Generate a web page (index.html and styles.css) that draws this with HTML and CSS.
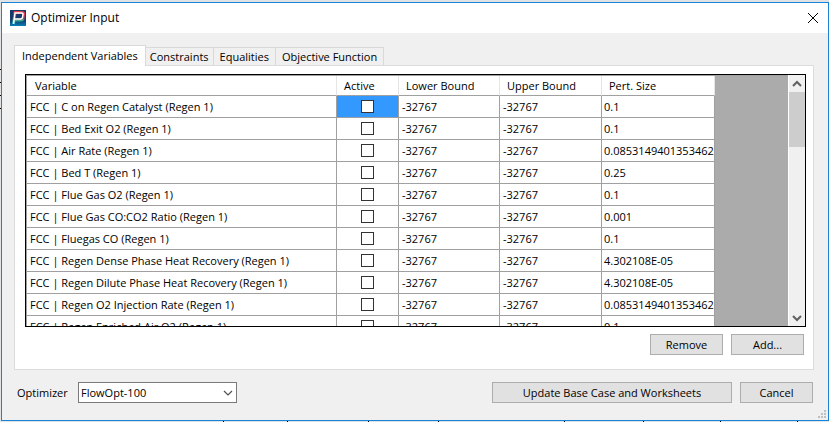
FILE: index.html
```html
<!DOCTYPE html>
<html lang="en">
<head>
<meta charset="utf-8">
<title>Optimizer Input</title>
<link rel="stylesheet" href="styles.css">
</head>
<body>
<main class="window">
  <header class="titlebar">
    <svg class="logo" width="16" height="16" viewBox="0 0 16 16" aria-hidden="true">
      <defs>
        <linearGradient id="tile" x1="0" y1="0" x2="0" y2="1"><stop offset="0" stop-color="#173564"/><stop offset=".65" stop-color="#123c70"/><stop offset="1" stop-color="#087eb5"/></linearGradient>
        <linearGradient id="glow" x1="0" y1="0" x2="0" y2="1"><stop offset="0" stop-color="#d8404c"/><stop offset=".45" stop-color="#a83a5c"/><stop offset=".7" stop-color="#3fae8c"/><stop offset="1" stop-color="#19a9d8"/></linearGradient>
      </defs>
      <path fill="url(#tile)" d="M0 0h16v16H0z"/>
      <path fill="none" stroke="url(#glow)" stroke-width="3" d="M3.500 14 5 2.500h7q2 0 1.700 2L13.200 8q-.4 2-2.500 2H5"/>
      <path fill="none" stroke="#fff" stroke-width="1.500" d="M3.500 14 5 3h6.500q1.700 0 1.500 1.500L12.500 7.500q-.3 1.500-2 1.500H4.500"/>
    </svg>
    <h1 class="title">Optimizer Input</h1>
    <button class="close" type="button" aria-label="Close">
      <svg width="12" height="12" viewBox="0 0 12 12" aria-hidden="true"><path d="m1 1 10 10M11 1 1 11" fill="none" stroke="#000" stroke-width="1"/></svg>
    </button>
  </header>
  <div class="content">
    <div class="tabs" role="tablist">
      <button class="tab selected" type="button" role="tab" aria-selected="true">Independent Variables</button>
      <button class="tab" type="button" role="tab">Constraints</button>
      <button class="tab roomy" type="button" role="tab">Equalities</button>
      <button class="tab roomy" type="button" role="tab">Objective Function</button>
    </div>
    <section class="panel" role="tabpanel">
      <div class="grid">
        <div class="view">
          <table class="data">
            <colgroup><col class="c-name"><col class="c-active"><col class="c-lower"><col class="c-upper"><col class="c-size"></colgroup>
            <thead><tr><th>Variable</th><th>Active</th><th>Lower Bound</th><th>Upper Bound</th><th>Pert. Size</th></tr></thead>
            <tbody>
              <tr><td>FCC | C on Regen Catalyst (Regen 1)</td><td class="check current"><input type="checkbox" aria-label="Active"></td><td>-32767</td><td>-32767</td><td>0.1</td></tr>
              <tr><td>FCC | Bed Exit O2 (Regen 1)</td><td class="check"><input type="checkbox" aria-label="Active"></td><td>-32767</td><td>-32767</td><td>0.1</td></tr>
              <tr><td>FCC | Air Rate (Regen 1)</td><td class="check"><input type="checkbox" aria-label="Active"></td><td>-32767</td><td>-32767</td><td>0.0853149401353462</td></tr>
              <tr><td>FCC | Bed T (Regen 1)</td><td class="check"><input type="checkbox" aria-label="Active"></td><td>-32767</td><td>-32767</td><td>0.25</td></tr>
              <tr><td>FCC | Flue Gas O2 (Regen 1)</td><td class="check"><input type="checkbox" aria-label="Active"></td><td>-32767</td><td>-32767</td><td>0.1</td></tr>
              <tr><td>FCC | Flue Gas CO:CO2 Ratio (Regen 1)</td><td class="check"><input type="checkbox" aria-label="Active"></td><td>-32767</td><td>-32767</td><td>0.001</td></tr>
              <tr><td>FCC | Fluegas CO (Regen 1)</td><td class="check"><input type="checkbox" aria-label="Active"></td><td>-32767</td><td>-32767</td><td>0.1</td></tr>
              <tr><td>FCC | Regen Dense Phase Heat Recovery (Regen 1)</td><td class="check"><input type="checkbox" aria-label="Active"></td><td>-32767</td><td>-32767</td><td>4.302108E-05</td></tr>
              <tr><td>FCC | Regen Dilute Phase Heat Recovery (Regen 1)</td><td class="check"><input type="checkbox" aria-label="Active"></td><td>-32767</td><td>-32767</td><td>4.302108E-05</td></tr>
              <tr><td>FCC | Regen O2 Injection Rate (Regen 1)</td><td class="check"><input type="checkbox" aria-label="Active"></td><td>-32767</td><td>-32767</td><td>0.0853149401353462</td></tr>
              <tr><td>FCC | Regen Enriched Air O2 (Regen 1)</td><td class="check"><input type="checkbox" aria-label="Active"></td><td>-32767</td><td>-32767</td><td>0.1</td></tr>
            </tbody>
          </table>
        </div>
        <div class="scrollbar" aria-hidden="true">
          <svg class="arrow" width="16" height="17" viewBox="0 0 16 17"><path d="m4 11 4-4 4 4" fill="none" stroke="#606060" stroke-width="2"/></svg>
          <div class="thumb"></div>
          <svg class="arrow" width="16" height="17" viewBox="0 0 16 17"><path d="m4 7 4 4 4-4" fill="none" stroke="#606060" stroke-width="2"/></svg>
        </div>
      </div>
      <div class="actions">
        <button class="button" type="button">Remove</button>
        <button class="button" type="button">Add...</button>
      </div>
    </section>
    <footer class="footer">
      <label class="label" for="optimizer">Optimizer</label>
      <div class="combo">
        <select id="optimizer"><option>FlowOpt-100</option></select>
        <svg class="chevron" width="10" height="6" viewBox="0 0 10 6" aria-hidden="true"><path d="m1 1 4 4 4-4" fill="none" stroke="#505050" stroke-width="1.200"/></svg>
      </div>
      <button class="button wide" type="button">Update Base Case and Worksheets</button>
      <button class="button" type="button">Cancel</button>
    </footer>
  </div>
  <svg class="grip" width="9" height="9" viewBox="0 0 9 9" aria-hidden="true"><path fill="#bfbfbf" d="M6 0h2v2H6zM3 3h2v2H3zM6 3h2v2H6zM0 6h2v2H0zM3 6h2v2H3zM6 6h2v2H6z"/></svg>
</main>
</body>
</html>
```
FILE: styles.css
```css
* { box-sizing: border-box; }

/* The edge of a spreadsheet shows round the window: its cell lines are the dark ticks. */
body {
  margin: 0;
  height: 100vh;
  padding: 2px 0 1px 1px;
  display: flex;
  background:
    linear-gradient(#000, #000) 0 69px / 1px 1px no-repeat,
    linear-gradient(#000, #000) 0 82px / 1px 1px no-repeat,
    linear-gradient(#000, #000) 0 95px / 1px 1px no-repeat,
    linear-gradient(#000, #000) 0 108px / 1px 1px no-repeat,
    linear-gradient(#000, #000) 223px 100% / 1px 1px no-repeat,
    linear-gradient(#000, #000) 287px 100% / 1px 1px no-repeat,
    linear-gradient(#000, #000) 368px 100% / 1px 1px no-repeat,
    linear-gradient(#000, #000) 438px 100% / 1px 1px no-repeat,
    linear-gradient(#000, #000) 564px 100% / 1px 1px no-repeat,
    linear-gradient(#000, #000) 643px 100% / 1px 1px no-repeat,
    linear-gradient(#000, #000) 720px 100% / 1px 1px no-repeat,
    linear-gradient(#000, #000) 797px 100% / 1px 1px no-repeat,
    #dfe3e6;
  color: #000;
  font: 11px/16px "Open Sans", "Noto Sans", sans-serif;
}

button, select { font: inherit; color: inherit; }

.window {
  position: relative;
  flex: 1;
  min-width: 0;
  display: flex;
  flex-direction: column;
  border: 1px solid #1883d7;
  background: #f0f0f0;
}

.titlebar {
  display: flex;
  align-items: center;
  height: 30px;
  padding: 0 9px 0 8px;
  background: #fff;
}

.title {
  flex: 1;
  margin: 0 0 0 5px;
  font-size: 12px;
  font-weight: 400;
}

.close {
  display: flex;
  padding: 0;
  border: 0;
  background: none;
}

.content {
  flex: 1;
  min-height: 0;
  display: flex;
  flex-direction: column;
  padding: 12px 14px 17px 12px;
}

.tabs { display: flex; align-items: flex-end; }

.tab {
  height: 18px;
  padding: 0 4px;
  border: 1px solid #d9d9d9;
  border-width: 1px 1px 0 0;
  background: #f0f0f0;
  white-space: nowrap;
}

.roomy { padding: 0 6px; }

.selected {
  height: 21px;
  margin-bottom: -1px;
  padding: 0 7px;
  border-left-width: 1px;
  background: #fff;
  z-index: 1;
}

.panel {
  flex: 1;
  min-height: 0;
  display: flex;
  flex-direction: column;
  padding: 8px 7px 14px 10px;
  border: 1px solid #dcdcdc;
  background: #fff;
}

.grid {
  flex: 1;
  min-height: 0;
  display: flex;
  border: 1px solid #000;
  background: #ababab;
}

.view {
  flex: 1;
  min-width: 0;
  overflow: hidden;
  border: 1px solid #a0a0a0;
  border-width: 1px 0 0 1px;
}

.data {
  table-layout: fixed;
  width: 688px;
  border-collapse: separate;
  border-spacing: 0;
}

.c-name { width: 310px; }
.c-active { width: 62px; }
.c-lower { width: 101px; }
.c-upper { width: 102px; }
.c-size { width: 113px; }

.data th,
.data td {
  padding: 0 0 0 3px;
  border: 1px solid #a0a0a0;
  border-width: 0 1px 1px 0;
  background: #fff;
  text-align: left;
  white-space: nowrap;
}

.data th {
  height: 20px;
  padding-left: 7px;
  border-right-color: #e5e5e5;
  font-weight: 400;
}

.data th:first-child { padding-left: 8px; }

.data td { height: 22px; }
.data td:last-child { padding-left: 2px; }

.data .check { padding: 0; text-align: center; }
.data .current { background: #3399ff; }

.check input {
  appearance: none;
  display: block;
  width: 13px;
  height: 13px;
  margin: 0 auto;
  border: 1px solid #333;
  background: #fff;
}

.scrollbar {
  display: flex;
  flex-direction: column;
  justify-content: space-between;
  width: 17px;
  border-left: 1px solid #fff;
  background: #f0f0f0;
}

.arrow { display: block; }

.thumb {
  height: 55px;
  margin-bottom: auto;
  background: #cdcdcd;
}

.actions {
  display: flex;
  justify-content: flex-end;
  gap: 8px;
  margin-top: 7px;
  padding-right: 2px;
}

.button {
  width: 73px;
  height: 21px;
  padding: 0;
  border: 1px solid #adadad;
  background: #e1e1e1;
  white-space: nowrap;
}

.wide { width: 240px; margin-left: auto; }

.footer {
  display: flex;
  align-items: center;
  gap: 8px;
  margin-top: 12px;
  padding: 0 1px 0 3px;
}

.label { width: 53px; }

.combo { display: grid; align-items: center; }

.combo select {
  grid-area: 1 / 1;
  appearance: none;
  width: 159px;
  height: 21px;
  padding: 0 2px;
  border: 1px solid #7a7a7a;
  border-radius: 0;
  background: #fff;
}

.chevron {
  grid-area: 1 / 1;
  justify-self: end;
  margin-right: 4px;
  pointer-events: none;
}

.grip {
  position: absolute;
  right: 1px;
  bottom: 1px;
}
```
